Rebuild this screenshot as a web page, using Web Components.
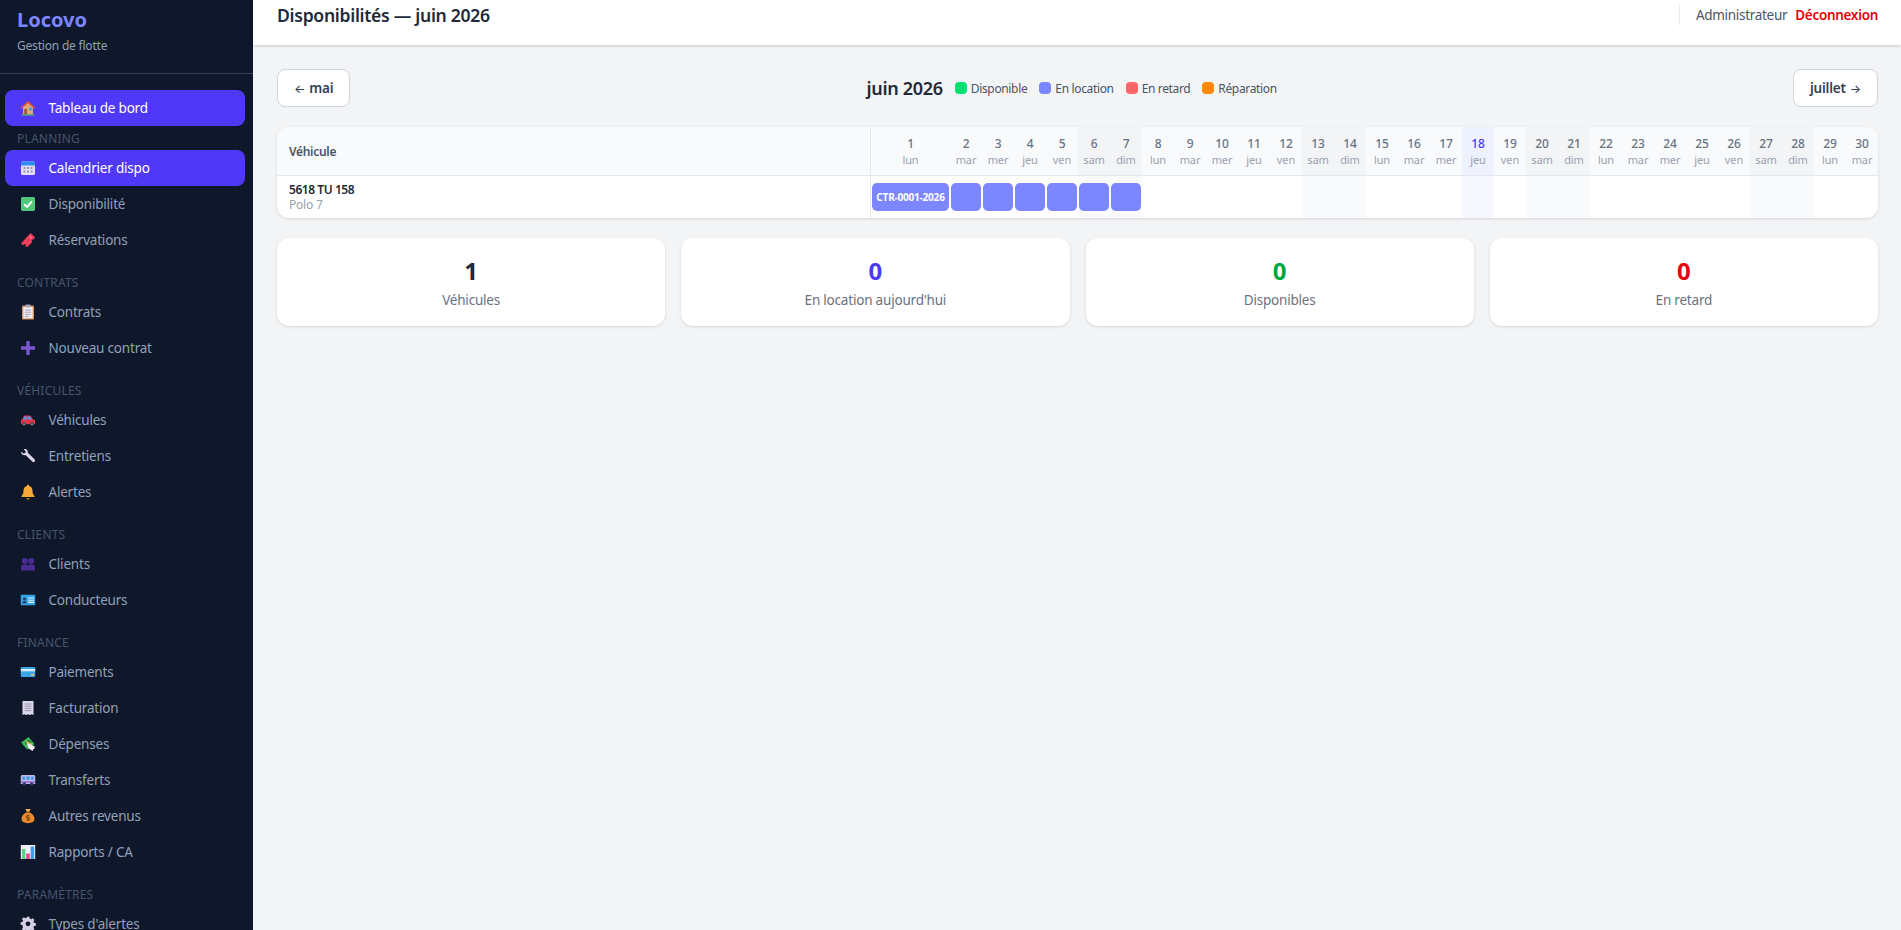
<!DOCTYPE html>
<html lang="fr">
<head>
<meta charset="utf-8">
<title>Disponibilités — juin 2026</title>
<style>
  html, body { margin: 0; height: 100%; overflow: hidden; background: #f3f4f6; }
  body { font-family: "Noto Sans", "Open Sans", "Liberation Sans", sans-serif; color: #1e2939; }
  #app { display: flex; height: 930px; overflow: hidden; }
  #main { flex: 1; min-width: 0; display: flex; flex-direction: column; }
  #content { padding: 24px 23px 24px 24px; display: flex; flex-direction: column; }
</style>
</head>
<body>
<div id="app">
  <app-sidebar>
    <nav-item icon="house" active>Tableau de bord</nav-item>
    <nav-label first>Planning</nav-label>
    <nav-item icon="calendar" active>Calendrier dispo</nav-item>
    <nav-item icon="check">Disponibilité</nav-item>
    <nav-item icon="ticket">Réservations</nav-item>
    <nav-label>Contrats</nav-label>
    <nav-item icon="clipboard">Contrats</nav-item>
    <nav-item icon="plus">Nouveau contrat</nav-item>
    <nav-label>Véhicules</nav-label>
    <nav-item icon="car">Véhicules</nav-item>
    <nav-item icon="wrench">Entretiens</nav-item>
    <nav-item icon="bell">Alertes</nav-item>
    <nav-label>Clients</nav-label>
    <nav-item icon="people">Clients</nav-item>
    <nav-item icon="idcard">Conducteurs</nav-item>
    <nav-label>Finance</nav-label>
    <nav-item icon="card">Paiements</nav-item>
    <nav-item icon="receipt">Facturation</nav-item>
    <nav-item icon="money">Dépenses</nav-item>
    <nav-item icon="bus">Transferts</nav-item>
    <nav-item icon="bag">Autres revenus</nav-item>
    <nav-item icon="chart">Rapports / CA</nav-item>
    <nav-label>Paramètres</nav-label>
    <nav-item icon="gear">Types d'alertes</nav-item>
  </app-sidebar>
  <div id="main">
    <top-bar>Disponibilités — juin 2026</top-bar>
    <div id="content">
      <month-toolbar title="juin 2026"></month-toolbar>
      <avail-table></avail-table>
      <stat-row>
        <stat-card value="1" color="#1e2939">Véhicules</stat-card>
        <stat-card value="0" color="#4f39f6">En location aujourd'hui</stat-card>
        <stat-card value="0" color="#00a63e">Disponibles</stat-card>
        <stat-card value="0" color="#e7000b">En retard</stat-card>
      </stat-row>
    </div>
  </div>
</div>

<script>
const ICONS = {
  house: `<path d="M8 1.500 1 8h2v6.500h10V8h2z" fill="#e0a878"/><path d="M8 1 .6 7.800l1 1L8 3.200l6.400 5.600 1-1z" fill="#d9512f"/><rect x="9.200" y="7.500" width="3" height="3" fill="#3fa6e8"/><rect x="4.200" y="9" width="2.800" height="5.500" fill="#9a5a34"/><rect x="1.500" y="14.400" width="13" height="1.100" fill="#4fc46f"/>`,
  calendar: `<rect x="1" y="1.500" width="14" height="13.500" rx="1.600" fill="#e3dcf7"/><path d="M1 5.500V3.100C1 2.200 1.700 1.500 2.600 1.500h10.800c.9 0 1.600.7 1.600 1.600v2.400z" fill="#2f8cf0"/><path d="M3.500 7h2v2h-2zM7 7h2v2H7zM10.500 7h2v2h-2zM3.500 10.500h2v2h-2zM7 10.500h2v2H7zM10.500 10.500h2v2h-2z" fill="#9b93b5"/>`,
  check: `<rect x="1" y="1" width="14" height="14" rx="1.400" fill="#4fc77c"/><path d="M4 8.300 7 11l5-5.600" fill="none" stroke="#fff" stroke-width="1.900"/>`,
  ticket: `<path d="M10.600 1 15 5.200 13.600 7.600 12 7.400l-.5 1.600 1 1L7 15.200 5.400 13.800l.2-1.700-1.600.2-.9.9L1 11.400z" fill="#ef3f5a"/><path d="m10 4.600 1.500 1.400" stroke="#ffa3b0" stroke-width="1.200"/>`,
  clipboard: `<rect x="2" y="1.500" width="12" height="14" rx="1" fill="#d9935c"/><rect x="3.400" y="3" width="9.200" height="11.300" fill="#f2eef6"/><rect x="5.500" y=".6" width="5" height="2.800" rx=".6" fill="#a9a3b8"/><path d="M4.800 6h6.400M4.800 8.200h6.400M4.800 10.400h6.400M4.800 12.400h4" stroke="#a9a3b8" stroke-width="1"/>`,
  plus: `<path d="M6.300 1h3.400v5.300H15v3.400H9.700V15H6.300V9.700H1V6.300h5.300z" fill="#7b56cf"/>`,
  car: `<path d="M4 3.500h6.500L13 7.500l2 .6v4.100H1V7.800L2 7.500z" fill="#e0354a"/><path d="M4.500 4.500h2.300v3H3.200zM7.800 4.500h2.300l1.700 3H7.800z" fill="#4a9fe8"/><circle cx="4" cy="12.200" r="1.900" fill="#3a3a4a"/><circle cx="12" cy="12.200" r="1.900" fill="#3a3a4a"/><circle cx="4" cy="12.200" r=".7" fill="#c7c7d4"/><circle cx="12" cy="12.200" r=".7" fill="#c7c7d4"/>`,
  wrench: `<path d="M1.200 3.400 3.400 5.400l1.800-.5.500-1.700L3.600 1.200C5.200.5 7 1.200 7.600 2.700c.2.700.2 1.300 0 1.900l6.900 6.700c.7.700.7 1.600.1 2.300-.7.700-1.700.7-2.300 0L5.500 6.900c-1.500.6-3.300 0-4-1.500-.3-.6-.4-1.300-.3-2z" fill="#dcd8e8"/>`,
  bell: `<path d="M8 .8c.7 0 1.200.5 1.200 1.200 2.400.6 3.300 2.500 3.300 4.800 0 2.600.6 3.900 2 5.200v1H1.500v-1c1.400-1.300 2-2.600 2-5.200 0-2.300.9-4.200 3.300-4.800C6.800 1.300 7.300.8 8 .8z" fill="#f7a935"/><path d="M6.300 14.200h3.400c0 .9-.8 1.300-1.700 1.300s-1.700-.4-1.700-1.300z" fill="#e88a1e"/>`,
  people: `<circle cx="4.800" cy="5" r="3" fill="#4b2c92"/><circle cx="11.200" cy="5" r="3" fill="#4b2c92"/><path d="M1 14.500v-3c0-1.700 1.300-3 3-3h1.700c1 0 1.800.5 2.300 1.200.5-.7 1.300-1.200 2.300-1.200H12c1.700 0 3 1.300 3 3v3z" fill="#4b2c92"/>`,
  idcard: `<rect x=".8" y="2.800" width="14.400" height="10.400" rx=".8" fill="#35a5ea"/><circle cx="4.500" cy="7" r="1.500" fill="#2b3a58"/><path d="M2.300 11.200c0-1.500 1-2.300 2.200-2.300s2.200.8 2.200 2.300z" fill="#2b3a58"/><path d="M8 6h6M8 8.200h6M8 10.400h6" stroke="#e6f2fb" stroke-width="1.100"/>`,
  card: `<rect x=".8" y="3" width="14.400" height="10" rx=".9" fill="#3aa7ea"/><rect x=".8" y="5" width="14.400" height="2.300" fill="#d8ecfa"/><rect x="11" y="10" width="3" height="1.500" fill="#f4c84a"/>`,
  receipt: `<path d="M2.500 1h11v14l-1.800-.8-1.900.8-1.800-.8-1.800.8-1.900-.8-1.800.8z" fill="#ded8ee"/><path d="M4.500 4h7M4.500 6.200h7M4.500 8.400h7M4.500 10.600h7" stroke="#8f89a5" stroke-width=".9"/>`,
  money: `<path d="m1 6.500 7.500-5.500 6 7-7.500 5.500z" fill="#3fb25a"/><path d="M5 6.800l4-3 2.500 3-4 3z" fill="#1f7a3b"/><path d="M6.500 6.500 15 10.500l-.8 1.200.6 1.600-1.600-.4-.5 2L8.500 12.500z" fill="#f4eef2"/><path d="M6 5.500 12 8.500" stroke="#f4c84a" stroke-width="1.300"/>`,
  bus: `<path d="M2.500 3h11c1 0 1.700.7 1.700 1.700V12H.8V4.700C.8 3.700 1.500 3 2.500 3z" fill="#c6b8ef"/><path d="M2.300 4.500h2.800v3.300H2.300zM6.200 4.500h3.600v3.300H6.200zM10.900 4.500h2.800v3.300h-2.800z" fill="#3f9ee8"/><rect x=".8" y="9.500" width="14.400" height="1" fill="#6a49b8"/><circle cx="4.300" cy="12" r="1.800" fill="#3f2f6e"/><circle cx="11.700" cy="12" r="1.800" fill="#3f2f6e"/>`,
  bag: `<path d="M5.500 1h5l-1.400 2.900H6.900z" fill="#f6b24a"/><rect x="6.300" y="3.500" width="3.400" height="1" fill="#8a4a1c"/><path d="M6.500 4.500h3c2.800 1 5 3.400 5 6.300 0 2.900-2.600 4.400-6.500 4.400s-6.500-1.500-6.500-4.400c0-2.900 2.200-5.300 5-6.300z" fill="#ec8a2c"/><path d="M9.600 7.700H7.300a1 1 0 0 0 0 2.200h1.400a1 1 0 0 1 0 2.100H6.400M8 6.800v6.100" fill="none" stroke="#6d3a12" stroke-width=".9"/>`,
  chart: `<rect x=".8" y="1" width="14.400" height="14" fill="#f1eef7"/><rect x="2" y="5" width="3.400" height="10" fill="#54d488"/><rect x="6.300" y="9.500" width="3.400" height="5.500" fill="#ee3f8a"/><rect x="10.600" y="2.500" width="3.600" height="12.500" fill="#3d9eee"/>`,
  gear: `<path d="M6.700 1h2.600l.4 2 1.300.6 1.800-1.100 1.800 1.800-1.100 1.800.6 1.300 2 .4v2.600l-2 .4-.6 1.300 1.100 1.800-1.800 1.800-1.800-1.100-1.300.6-.4 2H6.700l-.4-2-1.300-.6-1.800 1.100-1.800-1.800 1.100-1.800L1.900 9.800 0 9.400V6.800l2-.4.6-1.300L1.500 3.300l1.800-1.800L5.100 2.600 6.400 2z" transform="translate(.6 -.2) scale(.95)" fill="#d6d0e6"/><circle cx="8" cy="7.800" r="2.400" fill="#0f172b"/>`
};

class AppSidebar extends HTMLElement {
  connectedCallback() {
    this.attachShadow({ mode: 'open' });
    this.shadowRoot.innerHTML = `
      <style>
        :host { display: flex; flex-direction: column; flex: 0 0 253px; width: 253px; height: 930px; overflow: hidden; background: #0f172b; }
        .brand { height: 74px; box-sizing: border-box; padding: 9px 17px 0; border-bottom: 1px solid #314158; flex: none; }
        .name { font-size: 20px; line-height: 22px; font-weight: 700; color: #7c86ff; }
        .sub { font-size: 12px; line-height: 16px; margin-top: 7px; color: #90a1b9; letter-spacing: -.2px; }
        nav { padding: 16px 8px 0 5px; display: flex; flex-direction: column; }
      </style>
      <div class="brand">
        <div class="name">Locovo</div>
        <div class="sub">Gestion de flotte</div>
      </div>
      <nav><slot></slot></nav>
    `;
  }
}

class NavItem extends HTMLElement {
  connectedCallback() {
    this.attachShadow({ mode: 'open' });
    this.shadowRoot.innerHTML = `
      <style>
        :host { display: flex; align-items: center; height: 36px; padding-left: 15px; gap: 12.500px; border-radius: 8px; font-size: 13.500px; letter-spacing: -.2px; color: #90a1b9; }
        :host([active]) { background: #4f39f6; color: #fff; }
        svg { width: 16px; height: 16px; flex: none; }
        span { margin-top: -1px; }
      </style>
      <svg viewBox="0 0 16 16">${ICONS[this.getAttribute('icon')] || ''}</svg>
      <span><slot></slot></span>
    `;
  }
}

class NavLabel extends HTMLElement {
  connectedCallback() {
    this.attachShadow({ mode: 'open' });
    this.shadowRoot.innerHTML = `
      <style>
        :host { display: block; margin-top: 12px; padding-left: 12px; height: 24px; line-height: 26px; font-size: 12px; letter-spacing: .2px; text-transform: uppercase; color: #45556c; }
        :host([first]) { margin-top: 0; }
      </style>
      <slot></slot>
    `;
  }
}

class TopBar extends HTMLElement {
  connectedCallback() {
    this.attachShadow({ mode: 'open' });
    this.shadowRoot.innerHTML = `
      <style>
        :host { display: flex; align-items: center; justify-content: space-between; height: 45px; box-sizing: border-box; padding: 0 23px 15px 24px; background: #fff; box-shadow: 0 1px 3px rgba(0,0,0,.16); flex: none; }
        .title { font-size: 17.600px; font-weight: 600; letter-spacing: -.3px; color: #1e2939; }
        .user { display: flex; align-items: center; font-size: 13.500px; letter-spacing: -.3px; }
        .who { border-left: 1px solid #e5e7eb; padding-left: 16px; color: #4a5565; line-height: 20px; }
        a { color: #e7000b; font-weight: 600; margin-left: 8px; text-decoration: none; }
      </style>
      <div class="title"><slot></slot></div>
      <div class="user"><span class="who">Administrateur</span><a href="#">Déconnexion</a></div>
    `;
  }
}

class MonthToolbar extends HTMLElement {
  connectedCallback() {
    const legend = [['#05df72', 'Disponible'], ['#7c86ff', 'En location'], ['#ff6467', 'En retard'], ['#ff8904', 'Réparation']];
    this.attachShadow({ mode: 'open' });
    this.shadowRoot.innerHTML = `
      <style>
        :host { display: flex; align-items: center; justify-content: space-between; margin-bottom: 20px; }
        .btn { height: 38px; box-sizing: border-box; display: flex; align-items: center; gap: 4px; padding: 0 16px; background: #fff; border: 1px solid #d1d5dc; border-radius: 8px; font-size: 13.500px; font-weight: 600; letter-spacing: -.2px; color: #364153; }
        .btn span { font-family: Inter, sans-serif; font-size: 12px; font-weight: 500; }
        .mid { display: flex; align-items: center; gap: 12px; }
        .month { font-size: 18px; font-weight: 600; letter-spacing: -.3px; color: #1e2939; }
        .key { display: flex; align-items: center; gap: 4px; font-size: 12px; letter-spacing: -.35px; color: #4a5565; }
        i { width: 12px; height: 12px; border-radius: 4px; display: block; }
      </style>
      <div class="btn"><span>←</span>mai</div>
      <div class="mid">
        <span class="month">${this.getAttribute('title')}</span>
        ${legend.map(l => `<span class="key"><i style="background:${l[0]}"></i>${l[1]}</span>`).join('')}
      </div>
      <div class="btn">juillet<span>→</span></div>
    `;
  }
}

class AvailTable extends HTMLElement {
  connectedCallback() {
    const names = ['lun', 'mar', 'mer', 'jeu', 'ven', 'sam', 'dim'];
    let head = '', body = '';
    for (let d = 1; d <= 30; d++) {
      const wd = (d - 1) % 7;
      const cls = (wd >= 5 ? ' we' : '') + (d === 18 ? ' today' : '');
      head += `<div class="h day${cls}"><b>${d}</b><span>${names[wd]}</span></div>`;
      let bar = '';
      if (d === 1) bar = '<div class="bar">CTR-0001-2026</div>';
      else if (d <= 7) bar = '<div class="bar"></div>';
      body += `<div class="c${cls}">${bar}</div>`;
    }
    this.attachShadow({ mode: 'open' });
    this.shadowRoot.innerHTML = `
      <style>
        :host { display: grid; grid-template-columns: 1fr 79px repeat(29, 32px); background: #fff; border-radius: 12px; overflow: hidden; box-shadow: 0 1px 3px rgba(0,0,0,.12); margin-bottom: 20px; }
        .h { height: 49px; box-sizing: border-box; background: #f9fafb; border-bottom: 1px solid #e5e7eb; }
        .veh { display: flex; align-items: center; padding-left: 12px; border-right: 1px solid #e5e7eb; font-size: 12px; font-weight: 600; letter-spacing: -.3px; color: #4a5565; }
        .day { display: flex; flex-direction: column; align-items: center; justify-content: center; }
        .day b { font-size: 12px; line-height: 17px; font-weight: 500; letter-spacing: -.2px; color: #6a7282; }
        .day span { font-size: 11px; line-height: 16px; letter-spacing: -.1px; color: #99a1af; }
        .h.we { background: #f3f4f6; }
        .h.today { background: #eef2ff; }
        .h.today b { color: #4f39f6; }
        .c { height: 42px; box-sizing: border-box; padding: 7px 1px; }
        .c.we { background: #f9fafb; }
        .c.today { background: #f7f8ff; }
        .name { height: 42px; box-sizing: border-box; padding: 6px 0 0 12px; border-right: 1px solid #e5e7eb; }
        .name b { display: block; font-size: 12px; line-height: 15px; font-weight: 600; letter-spacing: -.45px; color: #1e2939; }
        .name span { display: block; font-size: 12px; line-height: 15px; letter-spacing: -.2px; color: #99a1af; }
        .bar { height: 28px; border-radius: 5px; background: #7c86ff; color: #fff; font-size: 10px; font-weight: 700; letter-spacing: -.2px; line-height: 28px; text-align: center; white-space: nowrap; }
      </style>
      <div class="h veh">Véhicule</div>${head}
      <div class="name"><b>5618 TU 158</b><span>Polo 7</span></div>${body}
    `;
  }
}

class StatRow extends HTMLElement {
  connectedCallback() {
    this.attachShadow({ mode: 'open' });
    this.shadowRoot.innerHTML = `
      <style>:host { display: grid; grid-template-columns: repeat(4, 1fr); gap: 16px; }</style>
      <slot></slot>
    `;
  }
}

class StatCard extends HTMLElement {
  connectedCallback() {
    this.attachShadow({ mode: 'open' });
    this.shadowRoot.innerHTML = `
      <style>
        :host { display: flex; flex-direction: column; align-items: center; height: 88px; box-sizing: border-box; padding-top: 17px; background: #fff; border-radius: 12px; box-shadow: 0 1px 3px rgba(0,0,0,.12); }
        .v { font-size: 24px; line-height: 32px; font-weight: 700; color: ${this.getAttribute('color')}; }
        .l { font-size: 13.500px; line-height: 20px; margin-top: 3px; letter-spacing: -.2px; color: #6a7282; }
      </style>
      <div class="v">${this.getAttribute('value')}</div>
      <div class="l"><slot></slot></div>
    `;
  }
}

customElements.define('app-sidebar', AppSidebar);
customElements.define('nav-item', NavItem);
customElements.define('nav-label', NavLabel);
customElements.define('top-bar', TopBar);
customElements.define('month-toolbar', MonthToolbar);
customElements.define('avail-table', AvailTable);
customElements.define('stat-row', StatRow);
customElements.define('stat-card', StatCard);
</script>
</body>
</html>
